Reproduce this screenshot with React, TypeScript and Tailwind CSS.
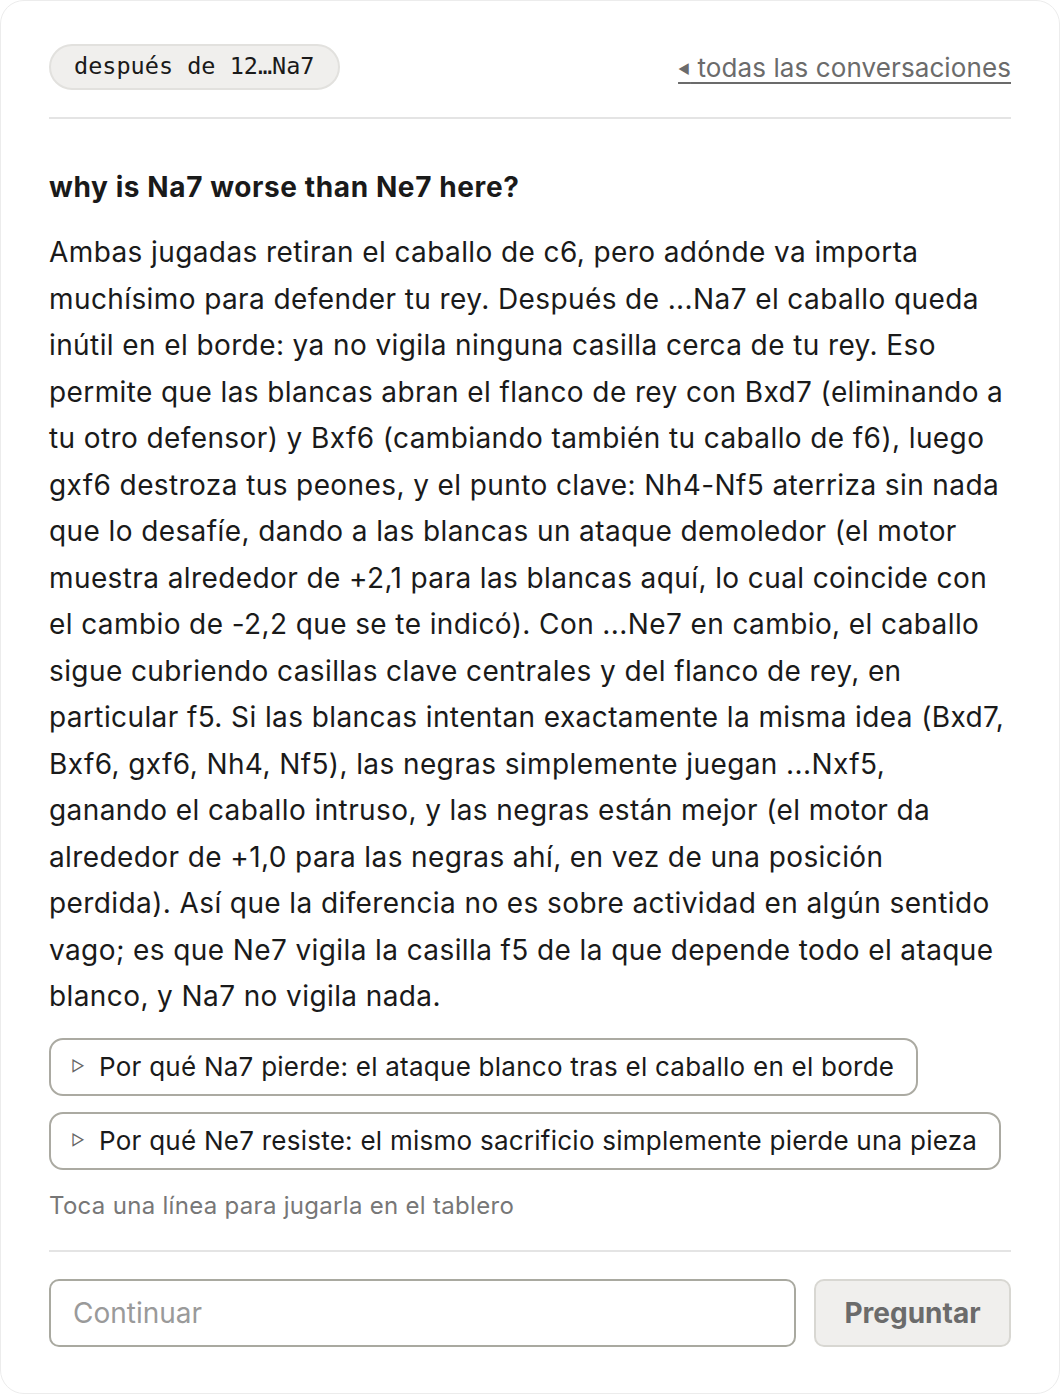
import { useState } from 'react';

const answer =
  'Ambas jugadas retiran el caballo de c6, pero adónde va importa muchísimo para defender tu rey. Después de ...Na7 el caballo queda inútil en el borde: ya no vigila ninguna casilla cerca de tu rey. Eso permite que las blancas abran el flanco de rey con Bxd7 (eliminando a tu otro defensor) y Bxf6 (cambiando también tu caballo de f6), luego gxf6 destroza tus peones, y el punto clave: Nh4-Nf5 aterriza sin nada que lo desafíe, dando a las blancas un ataque demoledor (el motor muestra alrededor de +2,1 para las blancas aquí, lo cual coincide con el cambio de -2,2 que se te indicó). Con ...Ne7 en cambio, el caballo sigue cubriendo casillas clave centrales y del flanco de rey, en particular f5. Si las blancas intentan exactamente la misma idea (Bxd7, Bxf6, gxf6, Nh4, Nf5), las negras simplemente juegan ...Nxf5, ganando el caballo intruso, y las negras están mejor (el motor da alrededor de +1,0 para las negras ahí, en vez de una posición perdida). Así que la diferencia no es sobre actividad en algún sentido vago; es que Ne7 vigila la casilla f5 de la que depende todo el ataque blanco, y Na7 no vigila nada.';

const lines = [
  'Por qué Na7 pierde: el ataque blanco tras el caballo en el borde',
  'Por qué Ne7 resiste: el mismo sacrificio simplemente pierde una pieza',
];

export default function App() {
  const [text, setText] = useState('');

  return (
    <div className="min-h-[1394px] bg-white rounded-[24px] border border-[#ececec] px-[48px] pt-[43px] pb-[44px] font-['Inter',sans-serif] text-[#1a1a1a]">
      {/* Header */}
      <div className="flex items-center justify-between pb-[27px] border-b-2 border-[#e4e4e4]">
        <span className="h-[46px] flex items-center px-[23px] rounded-full bg-[#f0efed] border-2 border-[#e2e1de] font-['DejaVu_Sans_Mono',monospace] text-[23.5px] text-[#1a1a1a]">
          después de 12…Na7
        </span>
        <a
          href="#"
          className="text-[26px] text-[#6b6b6b] underline decoration-[2px] underline-offset-[5px] tracking-[0.1px]"
        >
          <span className="text-[13px] align-[3px]">◀</span> todas las conversaciones
        </a>
      </div>

      {/* Question */}
      <h2 className="mt-[50px] text-[28px] leading-[36px] font-bold tracking-[0.6px]">
        why is Na7 worse than Ne7 here?
      </h2>
      <p className="mt-[24px] text-[28px] leading-[46.5px] tracking-[0.4px]">{answer}</p>

      {/* Lines */}
      <div className="mt-[18px] flex flex-col items-start gap-[16px]">
        {lines.map((l) => (
          <button
            key={l}
            className="h-[58px] flex items-center gap-[14px] pl-[20px] pr-[22px] rounded-[14px] border-2 border-[#abaaa2] bg-white text-[26px] tracking-[0.25px] text-[#1a1a1a]"
          >
            <span className="text-[15px] text-[#666]">▷</span>
            <span>{l}</span>
          </button>
        ))}
      </div>
      <p className="mt-[18px] text-[24px] tracking-[0.3px] text-[#777]">
        Toca una línea para jugarla en el tablero
      </p>

      {/* Composer */}
      <div className="mt-[26px] pt-[27px] border-t-2 border-[#e4e4e4] flex gap-[18px]">
        <input
          value={text}
          onChange={(e) => setText(e.target.value)}
          placeholder="Continuar"
          className="flex-1 h-[68px] rounded-[10px] border-2 border-[#a9a9a0] px-[22px] text-[28px] placeholder:text-[#9a9a9a] outline-none"
        />
        <button className="w-[197px] h-[68px] rounded-[10px] bg-[#f0efed] border-2 border-[#d8d7d2] text-[28px] font-bold text-[#6b6b6b]">
          Preguntar
        </button>
      </div>
    </div>
  );
}
